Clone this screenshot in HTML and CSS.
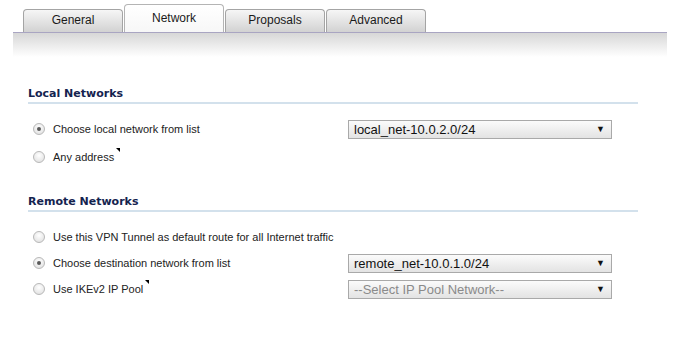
FILE: index.html
```html
<!DOCTYPE html>
<html>
  <head>
    <title>VPN Policy - Network</title>
    <link rel="stylesheet" href="styles.css">
  </head>
  <body>
    <div class="tabs">
      <div class="tab">General</div>
      <div class="tab active">Network</div>
      <div class="tab">Proposals</div>
      <div class="tab">Advanced</div>
    </div>
    <div class="tab-bar"></div>

    <div class="content">
      <div class="section">
        <h2 class="section-title">Local Networks</h2>
        <div class="rows">
          <div class="row">
            <label class="choice"><span class="radio checked"></span>Choose local network from list</label>
            <div class="select"><span>local_net-10.0.2.0/24</span><span class="arrow">&#9660;</span></div>
          </div>
          <div class="row">
            <label class="choice"><span class="radio"></span><span class="tip">Any address</span></label>
          </div>
        </div>
      </div>

      <div class="section">
        <h2 class="section-title">Remote Networks</h2>
        <div class="rows tight">
          <div class="row">
            <label class="choice"><span class="radio"></span>Use this VPN Tunnel as default route for all Internet traffic</label>
          </div>
          <div class="row">
            <label class="choice"><span class="radio checked"></span>Choose destination network from list</label>
            <div class="select"><span>remote_net-10.0.1.0/24</span><span class="arrow">&#9660;</span></div>
          </div>
          <div class="row">
            <label class="choice"><span class="radio"></span><span class="tip">Use IKEv2 IP Pool</span></label>
            <div class="select disabled"><span>--Select IP Pool Network--</span><span class="arrow">&#9660;</span></div>
          </div>
        </div>
      </div>
    </div>
  </body>
</html>
```

FILE: styles.css
```css
body {
  margin: 0;
  font-family: "Liberation Sans", Arial, sans-serif;
  font-size: 11px;
  color: #222;
  background-color: white;
}
.tabs {
  display: flex;
  align-items: flex-end;
  padding: 5px 0 0 23px;
  height: 27px;
  position: relative;
  z-index: 1;
}
.tab {
  box-sizing: border-box;
  width: 100px;
  height: 23px;
  margin-right: 1px;
  padding-top: 3px;
  text-align: center;
  font-size: 12px;
  color: #1a1a1a;
  border: 1px solid #a4a4a4;
  border-bottom: none;
  border-radius: 4px 4px 0 0;
  background: linear-gradient(#f6f6f6, #d2d2d2);
}
.tab.active {
  height: 28px;
  padding-top: 6px;
  border-color: #b4b4b4;
  background: linear-gradient(#ffffff, #f7f7f7);
}
.tab-bar {
  margin: 0 14px 0 13px;
  height: 24px;
  border-top: 1px solid #a9a5c2;
  background: linear-gradient(#d7d7d7, #ffffff);
}
.content {
  padding: 30px 43px 0 28px;
}
.section {
  margin-bottom: 28px;
}
.section-title {
  margin: 0;
  padding-bottom: 2px;
  font-family: "DejaVu Sans", Verdana, sans-serif;
  font-size: 11px;
  font-weight: bold;
  color: #14234f;
  border-bottom: 2px solid #d3e1ec;
}
.rows {
  display: flex;
  flex-direction: column;
  gap: 8px;
  padding-top: 15px;
}
.rows.tight {
  gap: 6px;
}
.row {
  display: grid;
  grid-template-columns: 320px 264px;
  align-items: center;
  height: 20px;
}
.choice {
  display: flex;
  align-items: center;
  padding-left: 5px;
}
.radio {
  box-sizing: border-box;
  width: 12px;
  height: 12px;
  margin-right: 8px;
  border-radius: 50%;
  border: 1px solid #b8b8b8;
  background: radial-gradient(circle at 50% 35%, #ffffff, #dcdcdc);
  position: relative;
}
.radio.checked::after {
  content: "";
  position: absolute;
  left: 3px;
  top: 3px;
  width: 4px;
  height: 4px;
  border-radius: 50%;
  background-color: #5a5a5a;
}
.tip {
  position: relative;
}
.tip::after {
  content: "";
  position: absolute;
  right: -6px;
  top: -3px;
  border-top: 4px solid #000;
  border-left: 4px solid transparent;
}
.select {
  box-sizing: border-box;
  display: flex;
  align-items: center;
  justify-content: space-between;
  width: 264px;
  height: 19px;
  padding: 0 6px 0 5px;
  font-size: 13px;
  color: #111;
  border: 1px solid #a9a9a9;
  background: linear-gradient(#fbfbfb, #e3e3e3);
}
.select.disabled {
  color: #8a8a8a;
}
.select .arrow {
  font-size: 9px;
  color: #111;
}
```
